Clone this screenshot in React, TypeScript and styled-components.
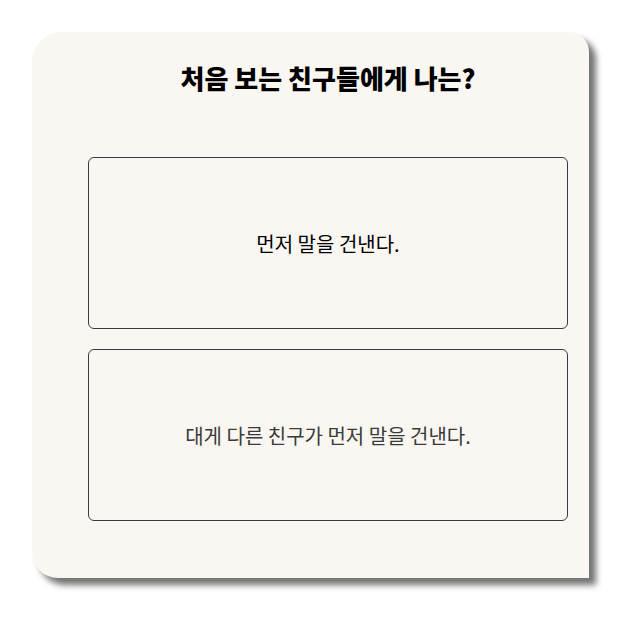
import { FC } from 'react';
import styled, { createGlobalStyle } from 'styled-components';

const GlobalStyle = createGlobalStyle`
  html, body {
    margin: 0;
    padding: 0;
    background: #ffffff;
  }
  body {
    font-family: 'Noto Sans CJK KR', 'Noto Sans', sans-serif;
  }
`;

const Page = styled.div`
  padding: 32px 0 0 32px;
  width: 637px;
  height: 626px;
  box-sizing: border-box;
`;

const Card = styled.section`
  display: flex;
  flex-direction: column;
  align-items: stretch;
  width: 557px;
  height: 546px;
  box-sizing: border-box;
  padding: 27px 21px 0 56px;
  background: #faf6f1;
  border-radius: 30px 20px 0 26px;
  box-shadow: 7px 7px 6px rgba(0, 0, 0, 0.55);
`;

const Title = styled.h1`
  margin: 0;
  font-family: 'Noto Sans CJK KR', sans-serif;
  font-size: 26px;
  font-weight: 900;
  line-height: 38px;
  text-align: center;
  color: #000000;
`;

const Options = styled.div`
  display: flex;
  flex-direction: column;
  gap: 20px;
  margin-top: 60px;
`;

const Option = styled.button<{ $active?: boolean }>`
  display: flex;
  align-items: center;
  justify-content: center;
  height: 172px;
  padding: 0;
  background: transparent;
  border: 1px solid #3a3a44;
  border-radius: 6px;
  font-family: 'Noto Sans CJK KR', sans-serif;
  font-size: 20px;
  font-weight: 400;
  color: ${({ $active }) => ($active ? '#000000' : '#3a3a3a')};
  cursor: pointer;
`;

const answers = ['먼저 말을 건낸다.', '대게 다른 친구가 먼저 말을 건낸다.'];

const App: FC = () => {
  return (
    <>
      <GlobalStyle />
      <Page>
        <Card>
          <Title>처음 보는 친구들에게 나는?</Title>
          <Options>
            {answers.map((text, i) => (
              <Option key={text} $active={i === 0}>
                {text}
              </Option>
            ))}
          </Options>
        </Card>
      </Page>
    </>
  );
};

export default App;
